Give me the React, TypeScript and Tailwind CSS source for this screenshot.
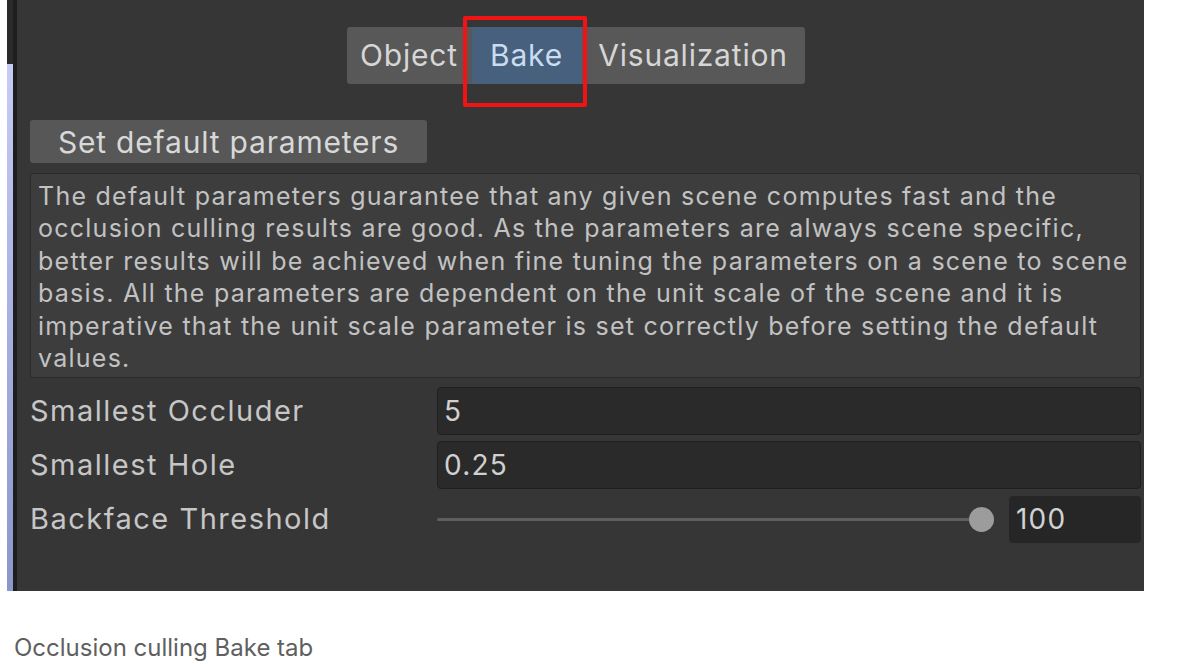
import React from "react";

const FONT = { fontFamily: "Inter, 'Noto Sans', sans-serif" };

const HELP_LINES = [
  "The default parameters guarantee that any given scene computes fast and the",
  "occlusion culling results are good. As the parameters are always scene specific,",
  "better results will be achieved when fine tuning the parameters on a scene to scene",
  "basis. All the parameters are dependent on the unit scale of the scene and it is",
  "imperative that the unit scale parameter is set correctly before setting the default",
  "values.",
];

function TabBar() {
  return (
    <div className="flex justify-center pt-[27px] pr-[20px]">
      <div className="flex h-[57px] items-stretch rounded-[3px] bg-[#585858] text-[30px] tracking-[0.8px] text-[#d6d6d6]">
        <div className="flex w-[125px] items-center justify-center">Object</div>
        <div className="relative flex w-[110px] items-center justify-center bg-[#46607e] text-[#c9dcf0]">
          Bake
          {/* red highlight drawn over the selected tab */}
          <div className="absolute -top-[11px] -bottom-[23px] -left-[9px] -right-[5px] rounded-[2px] border-[4px] border-[#f21414]" />
        </div>
        <div className="flex w-[223px] items-center justify-center">Visualization</div>
      </div>
    </div>
  );
}

function Label({ children }: { children: React.ReactNode }) {
  return <div className="w-[407px] shrink-0 text-[29px] tracking-[1.5px] text-[#c6c6c6]">{children}</div>;
}

function Field({ label, value }: { label: string; value: string }) {
  return (
    <div className="flex h-[50px] items-center">
      <Label>{label}</Label>
      <div className="flex h-[48px] flex-1 items-center rounded-[4px] border border-[#1f1f1f] bg-[#2a2a2a] px-[6px] text-[28px] tracking-[1.2px] text-[#d0d0d0]">
        {value}
      </div>
    </div>
  );
}

function SliderRow({ label, value }: { label: string; value: string }) {
  return (
    <div className="flex h-[50px] items-center">
      <Label>{label}</Label>
      <div className="h-[3px] flex-1 rounded-full bg-[#5f5f5f]" />
      <div className="-ml-[12px] h-[25px] w-[25px] shrink-0 rounded-full bg-[#9c9c9c]" />
      <div className="ml-[15px] flex h-[47px] w-[132px] items-center rounded-[4px] bg-[#262626] px-[7px] text-[28px] tracking-[1.2px] text-[#d2d2d2]">
        {value}
      </div>
    </div>
  );
}

export default function App() {
  return (
    <div className="min-h-[664px] bg-white" style={FONT}>
      <div className="ml-[7px] flex h-[591px] w-[1137px]">
        {/* left window edge */}
        <div className="flex w-[6px] flex-col">
          <div className="h-[64px] bg-[#2a2a2a]" />
          <div className="flex-1 bg-gradient-to-b from-[#c6ccf6] via-[#a7afe0] to-[#8d96c9]" />
        </div>
        <div className="w-[4px] bg-[#1e1e1e]" />

        <div className="flex flex-1 flex-col bg-[#363636] pl-[13px] pr-[3px]">
          <TabBar />

          <button className="mt-[36px] h-[43px] w-[397px] rounded-[3px] bg-[#575757] text-[30px] tracking-[0.8px] text-[#d8d8d8]">
            Set default parameters
          </button>

          <div className="mt-[10px] h-[205px] rounded-[3px] border border-[#2a2a2a] bg-[#3d3d3d] px-[7px] pt-[6px] text-[25px] leading-[32.4px] tracking-[1.25px] text-[#c2c2c2]">
            {HELP_LINES.map((line) => (
              <div key={line} className="whitespace-nowrap">
                {line}
              </div>
            ))}
          </div>

          <div className="mt-[8px] flex flex-col gap-[4px]">
            <Field label="Smallest Occluder" value="5" />
            <Field label="Smallest Hole" value="0.25" />
            <SliderRow label="Backface Threshold" value="100" />
          </div>
        </div>
      </div>

      <p className="mt-[41px] pl-[14px] text-[24px] leading-[32px] text-[#5f5f5f]">Occlusion culling Bake tab</p>
    </div>
  );
}
